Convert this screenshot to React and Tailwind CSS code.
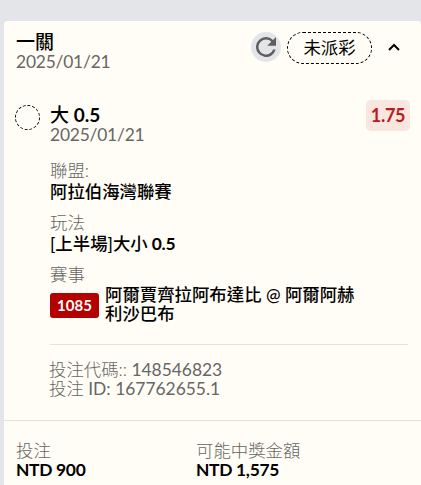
import React from "react";

const details = [
  { label: "聯盟:", value: "阿拉伯海灣聯賽" },
  { label: "玩法", value: "[上半場]大小", line: "0.5" },
];

const codes = [
  { label: "投注代碼::", value: "148546823" },
  { label: "投注", value: "ID: 167762655.1" },
];

const totals = [
  { label: "投注", value: "NTD 900" },
  { label: "可能中獎金額", value: "NTD 1,575" },
];

export default function BetSlip() {
  return (
    <div className="h-[485px] w-[421px] overflow-hidden bg-[#e4e5e8] pt-[21px] pl-1 font-['Lato','Noto_Sans_CJK_TC',sans-serif] text-[17.4px] leading-[19px] text-black">
      <div className="h-full rounded-t bg-[#fffdf5]">
        {/* Header */}
        <div className="flex h-[76px] justify-between pt-[11px] pr-5 pl-3">
          <div>
            <h1 className="h-5 text-[19px] leading-5 font-medium">一關</h1>
            <p className="leading-5 tracking-[-0.2px] text-[#666]">2025/01/21</p>
          </div>
          <div className="flex h-8 items-center">
            <button className="mb-[2px] flex h-[30px] w-[30px] items-center justify-center rounded-full bg-[#e4e5e8]">
              <svg viewBox="4 4 16 16" className="h-5 w-5 fill-[#5e5e5e]">
                <path d="M17.65 6.35A7.96 7.96 0 0 0 12 4a8 8 0 1 0 7.73 10h-2.08A6 6 0 1 1 12 6c1.66 0 3.14.69 4.22 1.78L13 11h7V4z" />
              </svg>
            </button>
            <span className="ml-1.5 flex h-8 w-[85px] items-center justify-center rounded-full border border-dashed border-black pb-0.5">
              未派彩
            </span>
            <svg viewBox="0 0 12 8" className="mr-px mb-0.5 ml-4 h-2 w-3 fill-none stroke-black stroke-2">
              <path d="M1 7l5-5 5 5" />
            </svg>
          </div>
        </div>

        {/* Selection */}
        <div className="flex h-[323px] pr-[11px] pl-[11px]">
          <div className="mt-2 h-[25px] w-[25px] shrink-0 rounded-full border border-dashed border-black" />
          <div className="ml-2.5 flex-1">
            <div className="flex justify-between pt-2">
              <div>
                <h2 className="h-5 text-[19px] leading-5 font-medium">
                  大 <span className="font-bold">0.5</span>
                </h2>
                <p className="tracking-[-0.2px] text-[#666]">2025/01/21</p>
              </div>
              <span className="-mt-[5px] flex h-[31px] w-11 items-center justify-center rounded-[5px] bg-[#f8e6df] pb-px text-lg font-bold tracking-[-0.3px] text-[#b71c1c]">
                1.75
              </span>
            </div>

            <div className="mt-[17px] space-y-3">
              {details.map((item) => (
                <div key={item.label}>
                  <p className="font-light text-[#666]">{item.label}</p>
                  <p className="pt-0.5 font-medium">
                    {item.value}
                    {item.line && <span className="font-bold tracking-[-0.2px]"> {item.line}</span>}
                  </p>
                </div>
              ))}
            </div>

            <p className="mt-3 font-light text-[#666]">賽事</p>
            <div className="mt-px flex items-start">
              <span className="mt-2 mr-1.5 flex h-[25px] w-[49px] items-center justify-center rounded-[3px] bg-[#b50000] text-[15px] font-bold text-white">
                1085
              </span>
              <p className="w-[255px] font-medium">阿爾賈齊拉阿布達比 @ 阿爾阿赫利沙巴布</p>
            </div>

            <div className="mt-[21px] mr-0.5 border-t border-[#e3e2dd] pt-[15px] text-[#666]">
              {codes.map((item) => (
                <p key={item.label} className="-ml-px">
                  <span className="font-light">{item.label}</span> {item.value}
                </p>
              ))}
            </div>
          </div>
        </div>

        {/* Totals */}
        <div className="grid grid-cols-[180px_1fr] border-t border-[#e3e2dd] pt-5 pl-3">
          {totals.map((item) => (
            <div key={item.label}>
              <p className="font-light text-[#666]">{item.label}</p>
              <p className="font-bold tracking-[-0.3px]">{item.value}</p>
            </div>
          ))}
        </div>
      </div>
    </div>
  );
}
